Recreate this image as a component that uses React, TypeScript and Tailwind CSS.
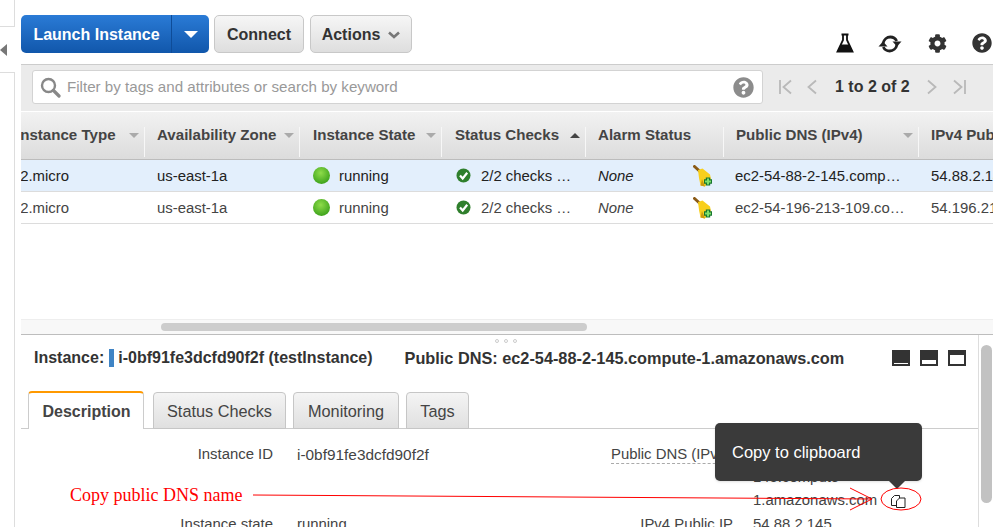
import React from "react";
import { FaCog, FaQuestionCircle } from "react-icons/fa";

const font = { fontFamily: '"Liberation Sans", Arial, sans-serif' };

function Caret({ className = "" }: { className?: string }) {
  return <span className={"inline-block w-0 h-0 border-x-[5px] border-x-transparent border-t-[5px] " + className} />;
}

function Flask() {
  return (
    <svg width="18" height="20" viewBox="0 0 18 20">
      <path d="M5.500 1.500h7M7 1.500v5.500L1.500 18.500h15L11 7V1.500" fill="none" stroke="#111" strokeWidth="1.800" />
      <path d="M4.600 11.500h8.800L17 19H1z" fill="#111" />
    </svg>
  );
}

function Sync() {
  return (
    <svg width="24" height="20" viewBox="0 0 24 20" fill="none" stroke="#222" strokeWidth="2.800">
      <path d="M5 9.500C5.800 5.500 9 3 12.300 3c3 0 5.200 1.500 6.400 4" />
      <path d="M14.500 7.400h9l-4.500 5.200z" fill="#222" stroke="none" />
      <path d="M19 10.500C18.200 14.500 15 17 11.700 17c-3 0-5.200-1.500-6.400-4" />
      <path d="M9.500 12.600H.500l4.500-5.200z" fill="#222" stroke="none" />
    </svg>
  );
}

function Pager({ dir, bar }: { dir: "l" | "r"; bar?: boolean }) {
  return (
    <svg width="14" height="16" viewBox="0 0 14 16" fill="none" stroke="#b9b9b9" strokeWidth="1.800">
      {dir === "l" ? (
        <>
          {bar && <path d="M2 1v14" />}
          <path d={bar ? "M13 1.500 5.500 8l7.500 6.500" : "M11 1.500 3.500 8l7.500 6.500"} />
        </>
      ) : (
        <>
          <path d={bar ? "M1 1.500 8.500 8 1 14.500" : "M3 1.500 10.500 8 3 14.500"} />
          {bar && <path d="M12 1v14" />}
        </>
      )}
    </svg>
  );
}

function Broom() {
  return (
    <svg width="21" height="23" viewBox="0 0 21 23">
      <path d="M1.500 1.500 7 6.500" stroke="#8a5a16" strokeWidth="3" strokeLinecap="round" />
      <path d="M5 5 9.500 3.500 17 9.500 18 14 12 21.500 7.500 20.500 6 13z" fill="#f8cf1c" />
      <path d="M7.500 20.500 12 21.500 9 14z" fill="#c89a10" />
      <path d="M15 12.500v8M11 16.500h8" stroke="#17762e" strokeWidth="4.400" />
      <path d="M15 13.500v6M12 16.500h6" stroke="#7fe06a" strokeWidth="2" />
    </svg>
  );
}

function Check() {
  return (
    <svg width="15" height="15" viewBox="0 0 15 15" className="shrink-0">
      <circle cx="7.500" cy="7.500" r="7" fill="#2f7f2c" />
      <path d="M4 7.500 6.700 10.500 11.200 4.800" fill="none" stroke="#fff" strokeWidth="2.200" />
    </svg>
  );
}

function Sep() {
  return <span className="absolute right-0 top-[15px] h-[30px] w-px bg-[#f7f7f7]" />;
}

const columns: { label: string; width: number; pad: string; caret?: "down" | "up" }[] = [
  { label: "Instance Type", width: 140, pad: "pl-[11px]", caret: "down" },
  { label: "Availability Zone", width: 155, pad: "pl-[12px]", caret: "down" },
  { label: "Instance State", width: 142, pad: "pl-[13px]", caret: "down" },
  { label: "Status Checks", width: 144, pad: "pl-[13px]", caret: "up" },
  { label: "Alarm Status", width: 138, pad: "pl-[12px]" },
  { label: "Public DNS (IPv4)", width: 195, pad: "pl-[12px]", caret: "down" },
  { label: "IPv4 Public IP", width: 120, pad: "pl-[12px]" },
];

function Row({ bg, dns, ip, color }: { bg: string; dns: string; ip: string; color: string }) {
  return (
    <div className={"flex h-8 items-center border-b border-[#dcdcdc] pt-[1px] text-[14.9px] " + bg + " " + color}>
      <div className="w-[140px] shrink-0 truncate pl-[11px]">t2.micro</div>
      <div className="w-[155px] shrink-0 pl-[12px]">us-east-1a</div>
      <div className="flex w-[142px] shrink-0 items-center gap-[9px] pl-[13px]">
        <span className="h-[17px] w-[17px] rounded-full bg-[radial-gradient(circle_at_45%_35%,#8fdc4a,#3fa41c_75%)]" />
        running
      </div>
      <div className="flex w-[144px] shrink-0 items-center gap-[10px] pl-[14px]">
        <Check />
        <span>2/2 checks …</span>
      </div>
      <div className="flex w-[138px] shrink-0 items-center justify-between pl-[12px] pr-[10px] italic">
        None
        <Broom />
      </div>
      <div className="w-[195px] shrink-0 whitespace-nowrap pl-[11px]">{dns}</div>
      <div className="w-[120px] shrink-0 whitespace-nowrap pl-[12px]">{ip}</div>
    </div>
  );
}

function Tab({ label, active }: { label: string; active?: boolean }) {
  return (
    <div
      className={
        active
          ? "-mb-px flex h-[38px] w-[116px] items-center justify-center rounded-t border-x border-t-2 border-x-[#ccc] border-t-[#f90] bg-white pl-[1px] pt-[1px] text-[16px] font-bold text-[#444]"
          : "-mb-px flex h-[37px] items-center justify-center rounded-t border border-[#c6c6c6] bg-gradient-to-b from-[#f4f4f4] to-[#e0e0e0] pt-[1px] text-[16.3px] text-[#444]"
      }
    >
      {label}
    </div>
  );
}

function Pane({ cls }: { cls: string }) {
  return (
    <span className="flex h-[16px] w-[18px] flex-col justify-end bg-[#333] p-[2px]">
      <span className={"w-full bg-white " + cls} />
    </span>
  );
}

export default function App() {
  return (
    <div className="relative flex h-[527px] w-[1006px] overflow-hidden bg-white text-[#444]" style={font}>
      {/* left gutter */}
      <div className="relative w-[21px] shrink-0">
        <div className="flex h-full flex-col">
          <div className="h-[27px] w-[15px] border-b border-r border-[#ddd]" />
          <div className="flex h-[45px] w-[15px] items-center">
            <span className="h-0 w-0 border-y-[6px] border-r-[7px] border-y-transparent border-r-[#777]" />
          </div>
          <div className="w-[15px] flex-1 border-r border-t border-[#ddd]" />
        </div>
      </div>

      {/* main */}
      <div className="flex w-[972px] shrink-0 flex-col">
        {/* toolbar */}
        <div className="flex h-[65px] shrink-0 border-b border-[#ccc]">
          <div className="mt-[15px] flex h-[38px] gap-[5px]">
            <div className="flex w-[188px] rounded-[5px] bg-gradient-to-b from-[#2a7bd6] to-[#1157ab] text-white">
              <div className="flex w-[151px] items-center justify-center border-r border-[#0e4c98] pl-[1px] pt-[2px] text-[16px] font-bold">
                Launch Instance
              </div>
              <div className="flex flex-1 items-center justify-center pt-[1px]">
                <Caret className="!border-x-[7px] !border-t-[7px] border-t-white" />
              </div>
            </div>
            <div className="flex w-[90px] items-center justify-center rounded-[5px] border border-[#c8c8c8] bg-gradient-to-b from-[#f6f6f6] to-[#dedede] pt-[2px] text-[16px] font-bold text-[#333]">
              Connect
            </div>
            <div className="ml-px flex w-[102px] items-center justify-center gap-[8px] rounded-[5px] border border-[#c8c8c8] bg-gradient-to-b from-[#f6f6f6] to-[#dedede] pt-[2px] text-[16px] font-bold text-[#333]">
              Actions
              <svg width="12" height="8" viewBox="0 0 12 8" fill="none" stroke="#777" strokeWidth="2.600">
                <path d="M1 1.500 6 6l5-4.500" />
              </svg>
            </div>
          </div>
          <div className="ml-auto mt-[29px] flex h-[28px] items-center text-[#222]">
            <Flask />
            <span className="ml-[24px] mt-[2px]">
              <Sync />
            </span>
            <FaCog className="ml-[26px] text-[19px] text-[#333]" />
            <FaQuestionCircle className="ml-[25px] mr-[1px] text-[20px] text-[#333]" />
          </div>
        </div>

        {/* filter bar */}
        <div className="flex h-[46px] shrink-0 items-start bg-[#ebebeb] pl-[11px] pt-[5px]">
          <div className="flex h-[34px] w-[731px] items-center rounded-[3px] border border-[#d3d3d3] bg-white pl-[7px] pr-[8px] text-[15.15px] text-[#999]">
            <svg width="21" height="21" viewBox="0 0 21 21" fill="none" stroke="#888" strokeWidth="2.400">
              <circle cx="8.500" cy="8.500" r="6.500" />
              <path d="M13.500 13.500 19 19" strokeWidth="3.200" strokeLinecap="round" />
            </svg>
            <span className="ml-[6px]">Filter by tags and attributes or search by keyword</span>
            <FaQuestionCircle className="ml-auto text-[21px] text-[#8c8c8c]" />
          </div>
          <div className="ml-[15px] flex h-[34px] items-center text-[#333]">
            <Pager dir="l" bar />
            <span className="ml-[13px]">
              <Pager dir="l" />
            </span>
            <span className="ml-[16px] text-[16px] font-bold">1 to 2 of 2</span>
            <span className="ml-[15px]">
              <Pager dir="r" />
            </span>
            <span className="ml-[14px]">
              <Pager dir="r" bar />
            </span>
          </div>
        </div>

        {/* table */}
        <div className="h-[208px] shrink-0 overflow-hidden">
          <div className="ml-[-16px] w-[1100px]">
            <div className="flex h-[49px] border-b border-t border-b-[#bcbcbc] border-t-white bg-gradient-to-b from-[#f2f2f2] to-[#dcdcdc] text-[15.1px] font-bold text-[#444]">
              {columns.map((c) => (
                <div
                  key={c.label}
                  style={{ width: c.width }}
                  className={"relative flex shrink-0 items-center justify-between whitespace-nowrap pr-[6px] " + c.pad}
                >
                  {c.label}
                  {c.caret === "down" && <Caret className="border-t-[#aaa]" />}
                  {c.caret === "up" && (
                    <span className="h-0 w-0 border-x-[5px] border-b-[5px] border-x-transparent border-b-[#444]" />
                  )}
                  <Sep />
                </div>
              ))}
            </div>
            <Row bg="bg-[#e3effc]" color="text-[#222]" dns="ec2-54-88-2-145.comp…" ip="54.88.2.145" />
            <Row bg="bg-white" color="text-[#444]" dns="ec2-54-196-213-109.co…" ip="54.196.213.109" />
          </div>
        </div>

        {/* horizontal scrollbar */}
        <div className="flex h-[16px] shrink-0 items-center border-b border-t border-b-[#bdbdbd] border-t-[#eee] bg-[#f8f8f8] pl-[140px]">
          <div className="h-[8px] w-[426px] rounded-full bg-[#cdcdcd]" />
        </div>

        {/* details */}
        <div className="relative flex min-h-0 flex-1">
          <div className="min-w-0 flex-1">
            <div className="flex h-[56px] items-start whitespace-nowrap pl-[13px] pt-[13px] text-[16px] font-bold leading-[20px] text-[#333]">
              <span>Instance:</span>
              <span className="ml-[5px] mt-[1px] h-[18px] w-[5px] bg-[#3f84c5]" />
              <span className="ml-[4px]">i-0bf91fe3dcfd90f2f (testInstance)</span>
              <span className="ml-[32px] text-[16.3px]">Public DNS: ec2-54-88-2-145.compute-1.amazonaws.com</span>
              <span className="ml-[48px] flex gap-[10px] pt-[2px]">
                <Pane cls="h-px" />
                <Pane cls="h-[4px]" />
                <Pane cls="h-[9px]" />
              </span>
            </div>
            <div className="flex h-[38px] items-end border-b border-[#ccc] pl-[7px]">
              <Tab label="Description" active />
              <div className="ml-[9px] w-[133px]">
                <Tab label="Status Checks" />
              </div>
              <div className="ml-[7px] w-[106px]">
                <Tab label="Monitoring" />
              </div>
              <div className="ml-[7px] w-[63px]">
                <Tab label="Tags" />
              </div>
            </div>
            <div className="grid grid-cols-[252px_338px_122px_auto] gap-y-[1px] pt-[14px] text-[14.9px] leading-[23px] text-[#444]">
              <div className="text-right">Instance ID</div>
              <div className="pl-[24px] text-[15.4px]">i-0bf91fe3dcfd90f2f</div>
              <div className="whitespace-nowrap text-left">
                <span className="border-b border-dashed border-[#aaa] pb-[1px]">Public DNS (IPv4)</span>
              </div>
              <div className="pl-[20px]">
                <div>ec2-54-88-2-</div>
                <div>145.compute-</div>
                <div>1.amazonaws.com</div>
              </div>
              <div className="text-right">Instance state</div>
              <div className="pl-[24px]">running</div>
              <div className="whitespace-nowrap text-right">IPv4 Public IP</div>
              <div className="pl-[20px]">54.88.2.145</div>
            </div>
          </div>
          <div className="w-[15px] shrink-0 border-l border-[#ddd] pl-[2px] pt-[10px]">
            <div className="h-[158px] w-[11px] rounded-full bg-[#c2c2c2]" />
          </div>
        </div>
      </div>

      {/* grip dots */}
      <div className="absolute left-[495px] top-[339px] flex gap-[5px]">
        <span className="h-[4px] w-[4px] rounded-full border border-[#ccc]" />
        <span className="h-[4px] w-[4px] rounded-full border border-[#ccc]" />
        <span className="h-[4px] w-[4px] rounded-full border border-[#ccc]" />
      </div>

      {/* tooltip */}
      <div className="absolute left-[715px] top-[423px] flex h-[58px] w-[207px] items-center rounded-[5px] bg-[#3a3a3a] pl-[17px] pt-[1px] text-[16.5px] text-white shadow">
        Copy to clipboard
      </div>
      <span className="absolute left-[889px] top-[481px] h-0 w-0 border-x-[8px] border-t-[8px] border-x-transparent border-t-[#3a3a3a]" />

      {/* annotation */}
      <svg className="pointer-events-none absolute left-0 top-0" width="1006" height="527" fill="none">
        <path d="M253 495 872 499" stroke="#f00" strokeWidth="1" />
        <path d="M850 488 872 499 850 510" stroke="#f00" strokeWidth="1" />
        <ellipse cx="901" cy="499" rx="20" ry="11" stroke="#f00" strokeWidth="1" />
        <path d="M891.500 505.500v-7l3-3h5v10z" fill="#fff" stroke="#222" strokeWidth="1" />
        <path d="M896.500 507.500v-6.500l3-3h5.500v9.500z" fill="#fff" stroke="#222" strokeWidth="1" />
      </svg>
      <div
        className="absolute left-[70px] top-[484px] whitespace-nowrap text-[18px] leading-[22px] text-[#f00]"
        style={{ fontFamily: '"Liberation Serif", "Times New Roman", serif' }}
      >
        Copy public DNS name
      </div>
    </div>
  );
}
